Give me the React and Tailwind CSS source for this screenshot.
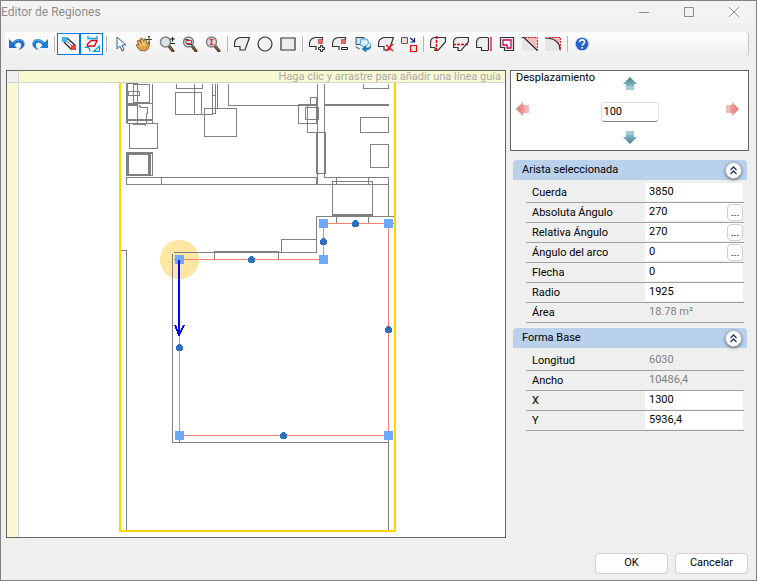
import React, { useState } from 'react';

const Icon = ({ children }) => (
  <svg viewBox="0 0 16 16" width="16" height="16" fill="none" aria-hidden="true">
    {children}
  </svg>
);

const Magnifier = ({ children }) => (
  <Icon>
    <path d="M10 10l4 5" stroke="#4a3c26" strokeWidth="3" strokeLinecap="round" />
    <path d="M10.500 10.500l3.500 4" stroke="#a98752" strokeWidth="1" />
    <circle cx="6.500" cy="6" r="5" fill="#dce3e7" stroke="#7b8286" strokeWidth="1.500" />
    {children}
  </Icon>
);

// Outlines shared by the shape tools
const SHAPE = 'M.5 10.500V7Q1 2.500 6 1.500H15.500L11 14H6V10.500z';
const OPEN_SHAPE = 'M7 14V10.500H.5V7Q1 2.500 6 1.500H13.500V4';
const CUT_SHAPE = 'M.5 11.500V6Q1 1.500 5.500 1.500H15.500V6L8 14.500H5V11.500z';

const icons = {
  undo: (
    <Icon>
      <path d="M0 3v9h8L5.500 9.300C8 5.500 11.500 6 12 8.500c.4 2-.6 3.500-2.500 5.500C14 12.500 16 10 15.500 7 14.500 2 7.500 1.500 3.500 6.500z" fill="#1b6fd0" />
      <path d="M5 7c3-4 8-4 9.500-.5" stroke="#5fb0f2" strokeWidth="1" />
    </Icon>
  ),
  redo: (
    <Icon>
      <path d="M16 3v9H8l2.500-2.700C8 5.500 4.500 6 4 8.500c-.4 2 .6 3.500 2.500 5.500C2 12.500 0 10 .5 7 1.500 2 8.500 1.500 12.500 6.500z" fill="#1b7bd6" />
      <path d="M11 7C8 3 3 3 1.500 6.500" stroke="#62c3f5" strokeWidth="1" />
    </Icon>
  ),
  snapLines: (
    <Icon>
      <path d="M6 2l9 8M3 6l8 8" stroke="#222" strokeWidth="1.200" />
      <path d="M5 4l6 6" stroke="#222" strokeDasharray="2 1" />
      <path d="M1 1h5v5H1z" fill="#40b4ee" />
      <path d="M10 9h5v5h-5z" fill="#f4433a" />
    </Icon>
  ),
  snapShapes: (
    <Icon>
      <path d="M4 0v2.500h9V0M.5 11.500C4 10 6 12 6 15.500M9.500 15.500h6V10z" stroke="#0aa0dc" strokeWidth="1.300" />
      <path d="M3.500 10V8l4-3.500H13L10.500 10z" stroke="#e00010" strokeWidth="1.400" fill="#fff" />
    </Icon>
  ),
  cursor: (
    <Icon>
      <path d="M4 1v12l3-3 2 5 2-1-2-5h4z" fill="#fff" stroke="#385e91" />
    </Icon>
  ),
  hand: (
    <Icon>
      <path d="M4 14.500L0 9l1-1 2 1-2-4 2-1 2 3-1-4 2-1 2 4V3h2l1 5 2-1 1 1-2 5-3 2z" fill="#dda24a" stroke="#805119" strokeWidth=".8" />
      <path d="M3 6l2.500 5M6 4l2 6M9 5v5" stroke="#f9d794" strokeWidth="1" />
      <path d="M13 0v7M9.500 3.500H16M12 1l1-1 1 1M12 6l1 1 1-1" stroke="#333" strokeWidth=".9" />
    </Icon>
  ),
  zoomInOut: (
    <Magnifier>
      <path d="M11 3h5M13.500 1v4.500M11 7.500h5" stroke="#222" strokeWidth="1.200" />
    </Magnifier>
  ),
  zoomWindow: (
    <Magnifier>
      <path d="M4 4.500h5.500v3H4z" stroke="#c8283a" />
      <path d="M3 3.500h4M5 8.500h5" stroke="#555" />
    </Magnifier>
  ),
  zoomAll: (
    <Magnifier>
      <path d="M6.500 3v6M4.500 3.500h4M4.500 8.500h4" stroke="#ed3434" strokeWidth="1.500" />
    </Magnifier>
  ),
  polygon: (
    <Icon>
      <path d={SHAPE} fill="#eee" stroke="#333" strokeWidth="1.200" />
    </Icon>
  ),
  circle: (
    <Icon>
      <circle cx="8" cy="8" r="7" fill="#f1f1f1" stroke="#333" strokeWidth="1.200" />
    </Icon>
  ),
  rectangle: (
    <Icon>
      <path d="M1 2h14v12H1z" fill="#eee" stroke="#333" strokeWidth="1.200" />
    </Icon>
  ),
  addPoint: (
    <Icon>
      <path d={OPEN_SHAPE} fill="#eee" stroke="#333" strokeWidth="1.200" />
      <path d="M9.500 3.500h4v4h-4z" fill="#f66" stroke="#833" strokeWidth=".6" />
      <path d="M11.500 9.500h2v2h2v2h-2v2h-2v-2h-2v-2h2z" fill="#fff" stroke="#222" />
    </Icon>
  ),
  removePoint: (
    <Icon>
      <path d={OPEN_SHAPE} fill="#eee" stroke="#333" strokeWidth="1.200" />
      <path d="M9.500 3.500h4v4h-4z" fill="#f66" stroke="#833" strokeWidth=".6" />
      <path d="M9.500 11.500h6v2h-6z" fill="#fff" stroke="#222" />
    </Icon>
  ),
  rotateShape: (
    <Icon>
      <path d="M1 1.500h8v7H1z" fill="#d8e1e5" stroke="#2f4c5c" />
      <path d="M6 3h6l2 4-4 4-5-2z" fill="#d8eefa" stroke="#43a0cd" />
      <path d="M16 7c0 4-2 5-5 5V9.500L7 13l4 3v-2c4 0 6-3 5-7zM1 10c0 2 2 3 4 3" fill="#1d77b9" stroke="#1d77b9" strokeWidth=".6" />
    </Icon>
  ),
  deleteShape: (
    <Icon>
      <path d={SHAPE} fill="#eee" stroke="#333" strokeWidth="1.200" />
      <path d="M8 9l7 6M15 8l-7 7" stroke="#ed171f" strokeWidth="1.600" />
    </Icon>
  ),
  replaceShape: (
    <Icon>
      <path d="M.5 1.500h6v6h-6z" fill="#e5dce0" stroke="#665a60" />
      <path d="M9.500 9.500h6v6h-6z" fill="#dce8e9" stroke="#f00" strokeWidth="1.200" />
      <path d="M9 2l4 3M13.500 2v4h-4" stroke="#061d75" strokeWidth="1.200" />
    </Icon>
  ),
  splitVertical: (
    <Icon>
      <path d={CUT_SHAPE} fill="#eee" stroke="#333" strokeWidth="1.200" />
      <path d="M6.500 0v16" stroke="#e40000" strokeWidth="1.400" strokeDasharray="3 1" />
    </Icon>
  ),
  splitHorizontal: (
    <Icon>
      <path d={CUT_SHAPE} fill="#eee" stroke="#333" strokeWidth="1.200" />
      <path d="M0 8.500h16" stroke="#e40000" strokeWidth="1.400" strokeDasharray="3 1" />
    </Icon>
  ),
  alignEdge: (
    <Icon>
      <path d="M5.500 14.500V11.500H.5V6Q1 1.500 5.500 1.500H12.500V14.500z" fill="#eee" stroke="#333" strokeWidth="1.200" />
      <path d="M12 1.500h3M12 14.500h3" stroke="#e36b6b" strokeDasharray="1 1" />
      <path d="M15 1v14" stroke="#d4143d" strokeWidth="1.300" />
    </Icon>
  ),
  offset: (
    <Icon>
      <path d="M1.500 1.500h13v13h-9v-3h-4z" fill="#eee" stroke="#333" strokeWidth="1.200" />
      <path d="M4 4h8v8H8V9H4z" fill="#fff" stroke="#d00058" strokeWidth="1.300" />
    </Icon>
  ),
  chamfer: (
    <Icon>
      <path d="M0 1h2l13 13v1H0z" fill="#e6e6e6" />
      <path d="M3 1h12v12z" fill="#f9bbbb" />
      <path d="M3 1.500h12.500v13" stroke="#e22" strokeDasharray="2 1" />
      <path d="M0 1.500h2l13.500 13" stroke="#222" strokeWidth="1.200" />
    </Icon>
  ),
  fillet: (
    <Icon>
      <path d="M0 2c9 0 15 4 15 13H0z" fill="#e6e6e6" />
      <path d="M4 1h11v11C14 6 10 3 4 2z" fill="#f9bbbb" />
      <path d="M4 1.500h11.500v13" stroke="#e22" strokeDasharray="2 1" />
      <path d="M0 2c9 0 15 4 15 12" stroke="#333" strokeWidth="1.200" />
    </Icon>
  ),
  help: (
    <Icon>
      <circle cx="8" cy="8" r="7.500" fill="#d9e5f7" />
      <circle cx="8" cy="8" r="6.300" fill="#2860cc" />
      <path d="M5.500 6.200c.2-3.500 5.500-2.800 5 .2C10.200 8 8.200 7.800 8.200 9.700M8.200 11v1.500" stroke="#fff" strokeWidth="1.700" />
    </Icon>
  ),
};

const toolGroups = [
  [['undo', 'Deshacer'], ['redo', 'Rehacer']],
  [['snapLines', 'Forzado a líneas'], ['snapShapes', 'Forzado a formas']],
  [['cursor', 'Seleccionar'], ['hand', 'Encuadre'], ['zoomInOut', 'Zoom'], ['zoomWindow', 'Zoom ventana'], ['zoomAll', 'Zoom completo']],
  [['polygon', 'Polígono'], ['circle', 'Círculo'], ['rectangle', 'Rectángulo']],
  [['addPoint', 'Añadir punto'], ['removePoint', 'Quitar punto'], ['rotateShape', 'Girar'], ['deleteShape', 'Eliminar'], ['replaceShape', 'Reemplazar']],
  [['splitVertical', 'Dividir vertical'], ['splitHorizontal', 'Dividir horizontal'], ['alignEdge', 'Alinear arista'], ['offset', 'Equidistancia'], ['chamfer', 'Chaflán'], ['fillet', 'Redondeo']],
  [['help', 'Ayuda']],
];

const Toolbar = () => {
  const [pressed, setPressed] = useState({ snapLines: true, snapShapes: true });

  const handleClick = (name) => {
    if (name in pressed) setPressed(prev => ({ ...prev, [name]: !prev[name] }));
  };

  return (
    <div role="toolbar" className="mt-[9px] ml-1 mr-[7px] flex h-6 items-center rounded-r border-r border-[#c4c4c4] bg-gradient-to-b from-[#fdfdfd] to-[#f0f0f0]">
      {toolGroups.map((group, i) => (
        <React.Fragment key={i}>
          {i > 0 && <span className="flex w-[6px] justify-center"><span className="h-4 w-px bg-[#b8b8b8]" /></span>}
          {group.map(([name, label]) => (
            <button
              key={name}
              type="button"
              aria-label={label}
              onClick={() => handleClick(name)}
              className={`flex h-[22px] w-[23px] items-center justify-center ${pressed[name] ? 'border border-[#0078d7] bg-[#f5faff]' : ''}`}
            >
              {icons[name]}
            </button>
          ))}
        </React.Fragment>
      ))}
    </div>
  );
};

// [x, y, width, height]
const furniture = [
  [133, 84, 16, 18], [128, 91, 11, 4], [129, 123, 28, 25], [126, 152, 26, 23],
  [128, 154, 20, 20], [126, 177, 35, 7], [175, 92, 26, 22], [204, 108, 32, 28],
  [360, 117, 28, 15], [370, 144, 18, 23], [298, 104, 18, 19], [305, 107, 13, 12],
  [316, 132, 9, 41], [332, 181, 40, 34], [281, 239, 35, 13],
];

const walls = [
  'M152 83V123H126M137 83V123M126 103H152M139 105L140 107H147V113H146V122M132 124H145V125',
  'M176 83V88H202V83M194 83V113L195 114M175 114H212V83M215 83V113H212M217 83V107M212 95H215',
  'M228 83V105H317M317 83V184M324 83V177H388V216M363 83V88H388V83',
  'M161 177H317M161 184H388M310 104V97H316V104M307 105V132H316',
  'M336 177V184M368 177V184M336 216V223M368 216V223',
  'M394 216H316V252H173M172 253V442H388M388 436V530M173 259H180M179 436V442M388 223H394',
  'M214 259V251H278V259M120 250H126V530',
];

const heavyWalls = 'M127 83V123M126 120H152M128 105H138M128 83H138M126 153H152M127 152V175M126 175H151M150 153V175M325 105H389M317 132V173M325 132V173M333 215H373M317 104V123M317 178V184M215 252H279';

const vertices = [[179, 259], [323, 259], [323, 223], [388, 223], [388, 435], [179, 435]];
const midpoints = [[251, 259], [323, 241], [355, 223], [388, 329], [283, 435], [179, 347]];

const Plan = () => (
  <svg viewBox="19 83 486 454" preserveAspectRatio="xMinYMin meet" className="block h-full w-full" shapeRendering="crispEdges" fill="none" role="img" aria-label="Planta">
    <g transform="translate(0.5 0.5)">
      <circle cx="179" cy="259" r="19.500" fill="#ffe6a3" />
      <g stroke="#808080">
        {furniture.map(([x, y, w, h]) => <rect key={`${x}-${y}`} x={x} y={y} width={w} height={h} />)}
        {walls.map(d => <path key={d} d={d} />)}
      </g>
    </g>
    <path d={heavyWalls} stroke="#808080" strokeWidth="2" />
    <path d="M120 80V531H395V80" stroke="#ffd500" strokeWidth="2" />
    <g transform="translate(0.5 0.5)">
      <polygon points={vertices.join(' ')} stroke="#fa8072" />
      {vertices.map(([x, y]) => <rect key={`${x}-${y}`} x={x - 4.5} y={y - 4.5} width="9" height="9" fill="#6eaafc" />)}
      {midpoints.map(([x, y]) => <circle key={`${x}-${y}`} cx={x} cy={y} r="3.500" fill="#2d6fc0" />)}
    </g>
    <path d="M179 260V335M175 325L179 335L184 325" stroke="#0000ff" strokeWidth="2" />
  </svg>
);

const Canvas = () => (
  <div className="grid min-w-0 flex-1 grid-cols-[12px_1fr] grid-rows-[12px_1fr] border border-[#646464] bg-white">
    <div className="border-r border-b border-[#d3d3d3] bg-[#f0f0f0]" />
    <div className="border-b border-[#d3d3d3] bg-[#fafad2] pr-1 text-right text-[11px] leading-[11px] whitespace-nowrap text-[#a9a9a9]">
      Haga clic y arrastre para añadir una línea guía
    </div>
    <div className="border-r border-[#d3d3d3] bg-[#fafad2]" />
    <div className="min-h-0 min-w-0"><Plan /></div>
  </div>
);

const rotations = { up: '', right: 'rotate-90', down: 'rotate-180', left: '-rotate-90' };

const ArrowButton = ({ dir, label, className = '' }) => {
  const vertical = dir === 'up' || dir === 'down';
  return (
    <button type="button" aria-label={label} className={`h-[14px] w-[14px] ${className}`}>
      <svg viewBox="0 0 14 14" width="14" height="14" className={rotations[dir]} aria-hidden="true">
        <defs>
          <linearGradient id={`arrow-${dir}`} x1="0" y1="0" x2="0" y2="1">
            <stop offset="0" stopColor={vertical ? '#52788a' : '#d67777'} />
            <stop offset=".6" stopColor={vertical ? '#78b2c2' : '#f29a9a'} />
            <stop offset="1" stopColor={vertical ? '#a8d2dd' : '#f4c0c0'} />
          </linearGradient>
        </defs>
        <path d="M7 0l7 7h-3v6H3V7H0z" fill={`url(#arrow-${dir})`} />
        <path d="M3 10h8" stroke="#fff" strokeOpacity=".4" />
      </svg>
    </button>
  );
};

const Displacement = () => {
  const [step, setStep] = useState('100');

  return (
    <div className="grid h-[81px] grid-cols-[1fr_58px_1fr] grid-rows-[31px_20px_1fr] border border-[#646464] bg-white px-[5px]">
      <label htmlFor="step" className="leading-[14px]">Desplazamiento</label>
      <ArrowButton dir="up" label="Arriba" className="mt-[6px] justify-self-center" />
      <span />
      <ArrowButton dir="left" label="Izquierda" />
      <input
        id="step"
        value={step}
        onChange={(e) => setStep(e.target.value)}
        className="w-full rounded-sm border border-[#e0e0e0] border-b-[#808080] px-[2px] outline-none"
      />
      <ArrowButton dir="right" label="Derecha" className="mr-1 justify-self-end" />
      <span />
      <ArrowButton dir="down" label="Abajo" className="mt-2 justify-self-center" />
    </div>
  );
};

const PropertyRow = ({ id, label, value, readOnly, more }) => {
  const [text, setText] = useState(value);

  return (
    <div className="flex h-5 border-b border-[#a0a0a0] pl-[6px]">
      <label htmlFor={id} className="w-[113px] leading-5">{label}</label>
      <div className={`mr-px mb-px flex min-w-0 flex-1 items-center ${readOnly ? '' : 'bg-white'}`}>
        <input
          id={id}
          value={text}
          readOnly={readOnly}
          onChange={(e) => setText(e.target.value)}
          className={`w-full min-w-0 flex-1 bg-transparent pl-1 outline-none ${readOnly ? 'text-[#808080]' : ''}`}
        />
        {more && (
          <button type="button" aria-label={`Opciones de ${label}`} className="h-[17px] w-4 rounded border border-[#d0d0d0] bg-[#fdfdfd] leading-[15px]">
            ...
          </button>
        )}
      </div>
    </div>
  );
};

const PropertyGroup = ({ title, rows }) => {
  const [open, setOpen] = useState(true);

  return (
    <section className="ml-[3px]">
      <header className="mr-[2px] flex h-5 items-center justify-between rounded-t bg-[#b9d1ea] pr-[5px] pl-[9px]">
        <h2>{title}</h2>
        <button
          type="button"
          aria-label={`Contraer ${title}`}
          aria-expanded={open}
          onClick={() => setOpen(!open)}
          className="flex h-[17px] w-[17px] items-center justify-center rounded-full border border-[#b4b4c0] bg-white shadow-sm shadow-gray-500"
        >
          <svg viewBox="0 0 9 9" width="9" height="9" fill="none" stroke="#1e3264" strokeWidth="1.300" aria-hidden="true">
            <path d="M1.500 4l3-3 3 3M1.500 8l3-3 3 3" />
          </svg>
        </button>
      </header>
      {open && (
        <div className="mt-[3px] mr-[5px] ml-[13px]">
          {rows.map(row => <PropertyRow key={row.id} {...row} />)}
        </div>
      )}
    </section>
  );
};

const edgeRows = [
  { id: 'chord', label: 'Cuerda', value: '3850' },
  { id: 'absAngle', label: 'Absoluta Ángulo', value: '270', more: true },
  { id: 'relAngle', label: 'Relativa Ángulo', value: '270', more: true },
  { id: 'arcAngle', label: 'Ángulo del arco', value: '0', more: true },
  { id: 'sagitta', label: 'Flecha', value: '0' },
  { id: 'radius', label: 'Radio', value: '1925' },
  { id: 'area', label: 'Área', value: '18.78 m²', readOnly: true },
];

const baseRows = [
  { id: 'length', label: 'Longitud', value: '6030', readOnly: true },
  { id: 'width', label: 'Ancho', value: '10486,4', readOnly: true },
  { id: 'posX', label: 'X', value: '1300' },
  { id: 'posY', label: 'Y', value: '5936,4' },
];

const TitleBar = () => (
  <div className="flex h-[22px] items-center bg-[#f3f3f3]">
    <h1 className="flex-1 text-[12px] text-[#8c8c8c]">Editor de Regiones</h1>
    <div className="flex">
      {[
        ['Minimizar', 'M1 6.500h10'],
        ['Maximizar', 'M1.500 1.500h9v9h-9z'],
        ['Cerrar', 'M1 1l10 10M11 1L1 11'],
      ].map(([label, d]) => (
        <button key={label} type="button" aria-label={label} className="flex w-[45px] items-center justify-center">
          <svg viewBox="0 0 12 12" width="12" height="12" fill="none" stroke="#8c8c8c" aria-hidden="true">
            <path d={d} />
          </svg>
        </button>
      ))}
    </div>
  </div>
);

const App = () => (
  <div className="flex min-h-screen flex-col border border-[#808080] bg-[#efefef] font-['Roboto','Liberation_Sans',sans-serif] text-[11px] text-black">
    <TitleBar />
    <Toolbar />
    <main className="mt-[14px] mr-[7px] ml-[5px] flex flex-1 gap-1">
      <Canvas />
      <aside className="w-[239px]">
        <Displacement />
        <div className="mt-[9px] flex flex-col gap-[5px]">
          <PropertyGroup title="Arista seleccionada" rows={edgeRows} />
          <PropertyGroup title="Forma Base" rows={baseRows} />
        </div>
      </aside>
    </main>
    <footer className="flex justify-end gap-[7px] pt-[15px] pr-2 pb-[6px]">
      <button type="button" className="h-[21px] w-[73px] rounded border border-[#d0d0d0] bg-[#fdfdfd]">OK</button>
      <button type="button" className="h-[21px] w-[73px] rounded border border-[#d0d0d0] bg-[#fdfdfd]">Cancelar</button>
    </footer>
  </div>
);

export default App;
